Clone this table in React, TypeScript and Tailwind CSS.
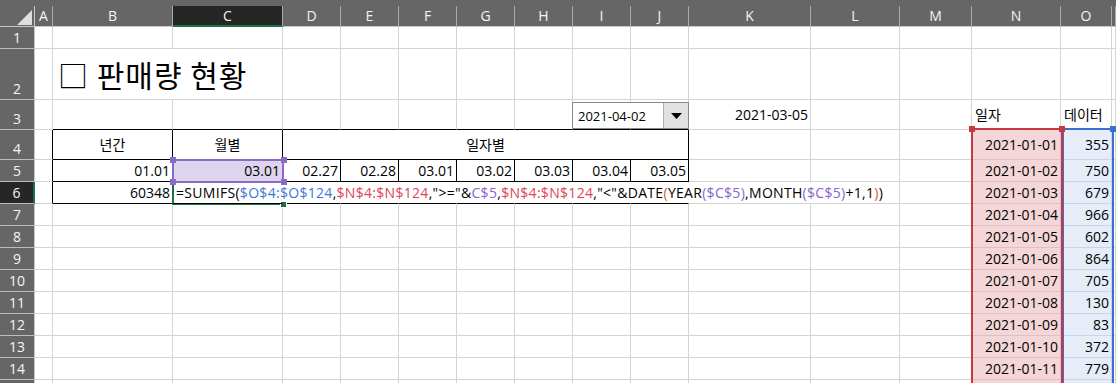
import React from 'react';

const COLS = ['A', 'B', 'C', 'D', 'E', 'F', 'G', 'H', 'I', 'J', 'K', 'L', 'M', 'N', 'O', 'P'];
const ROWS = [1, 2, 3, 4, 5, 6, 7, 8, 9, 10, 11, 12, 13, 14, 15];

const RC: Record<string, string> = {
  g: 'border-r-[#d4d4d4]',
  k: 'border-r-black',
  n: 'border-r-transparent',
  p: 'border-r-[#dcc0c2]',
  b: 'border-r-[#cbd4e2]',
};
const BC: Record<string, string> = {
  g: 'border-b-[#d4d4d4]',
  k: 'border-b-black',
  n: 'border-b-transparent',
  p: 'border-b-[#dcc0c2]',
  b: 'border-b-[#cbd4e2]',
};
const AL: Record<string, string> = {
  l: 'justify-start pl-[3px]',
  r: 'justify-end pr-[2px]',
  c: 'justify-center',
};

const dates = [
  '2021-01-01', '2021-01-02', '2021-01-03', '2021-01-04', '2021-01-05', '2021-01-06',
  '2021-01-07', '2021-01-08', '2021-01-09', '2021-01-10', '2021-01-11',
];
const vals = ['355', '750', '679', '966', '602', '864', '705', '130', '83', '372', '779'];
const row5 = ['02.27', '02.28', '03.01', '03.02', '03.03', '03.04', '03.05'];

function Formula() {
  const k = 'text-black';
  const bl = 'text-[#3f77d6]';
  const rd = 'text-[#e0435a]';
  const pu = 'text-[#8a65cc]';
  const or = 'text-[#e0582a]';
  return (
    <span className="whitespace-nowrap tracking-[0.3px]">
      <span className={k}>=SUMIFS(</span>
      <span className={bl}>$O$4:$O$124</span>
      <span className={k}>,</span>
      <span className={rd}>$N$4:$N$124</span>
      <span className={k}>,"&gt;="&amp;</span>
      <span className={pu}>C$5</span>
      <span className={k}>,</span>
      <span className={rd}>$N$4:$N$124</span>
      <span className={k}>,"&lt;"&amp;DATE</span>
      <span className={or}>(</span>
      <span className={k}>YEAR</span>
      <span className={pu}>($C$5)</span>
      <span className={k}>,MONTH</span>
      <span className={pu}>($C$5)</span>
      <span className={k}>+1,1</span>
      <span className={or}>)</span>
      <span className={k}>)</span>
    </span>
  );
}

function Cell({ c, r }: { c: string; r: number }) {
  let right = 'g';
  let bottom = 'g';
  let bg = '';
  let align = 'l';
  let content: React.ReactNode = null;
  let extra = '';
  const inTable = c >= 'B' && c <= 'J' && c.length === 1;

  if (r === 3 && inTable) bottom = 'k';
  if (c === 'A' && r >= 4 && r <= 6) right = 'k';

  if (r === 2 && c === 'B') {
    right = 'n';
    content = (
      <span className="whitespace-nowrap font-['Noto_Sans_CJK_KR',sans-serif] text-[30px] leading-[40px] tracking-[1px] text-black">
        □ 판매량 현황
      </span>
    );
    extra = 'relative z-10 pl-[5px]';
  }
  if (r === 3 && c === 'K') {
    content = '2021-03-05';
    align = 'r';
  }
  if (r === 3 && c === 'N') content = '일자';
  if (r === 3 && c === 'O') content = '데이터';

  if (r === 4) {
    if (c === 'B') { content = '년간'; align = 'c'; right = 'k'; bottom = 'k'; }
    if (c === 'C') { content = '월별'; align = 'c'; right = 'k'; bottom = 'k'; }
    if (c === 'D') { content = '일자별'; align = 'c'; right = 'k'; bottom = 'k'; extra = 'col-span-7'; }
  }
  if (r === 5 && inTable) {
    right = 'k';
    bottom = 'k';
    align = 'r';
    if (c === 'B') content = '01.01';
    if (c === 'C') { content = '03.01'; bg = 'bg-[#ddd4ee]'; }
    if (c >= 'D') content = row5[COLS.indexOf(c) - 3];
  }
  if (r === 6) {
    if (c === 'B') { content = '60348'; align = 'r'; right = 'k'; bottom = 'k'; }
    if (c >= 'C' && c <= 'J') { right = 'n'; bottom = 'k'; }
    if (c === 'K') right = 'n';
    if (c === 'C') {
      content = <Formula />;
      extra = 'relative z-10';
    }
  }
  if (c === 'N' && r >= 4) {
    bg = 'bg-[#f4d6d8]';
    right = 'p';
    bottom = 'p';
    align = 'r';
    content = dates[r - 4] ?? null;
  }
  if (c === 'O' && r >= 4) {
    bg = 'bg-[#e6edf9]';
    right = 'b';
    bottom = 'b';
    align = 'r';
    content = vals[r - 4] ?? null;
  }

  return (
    <div
      className={`flex min-w-0 items-center border-r border-b ${RC[right]} ${BC[bottom]} ${bg} ${AL[align]} ${extra} text-[14px] leading-[20px] text-black`}
    >
      {content}
    </div>
  );
}

function RowHeader({ r }: { r: number }) {
  const sel = r === 6;
  return (
    <div
      className={`flex items-end justify-center border-b border-b-[#bdbdbd] pb-[1px] text-[14px] leading-[18px] text-[#f5f5f5] ${
        sel ? 'bg-[#262626] border-r-2 border-r-[#1e7145]' : 'bg-[#666666] border-r border-r-[#c8c8c8]'
      }`}
    >
      {r < 15 ? r : ''}
    </div>
  );
}

function ColHeader({ c }: { c: string }) {
  const sel = c === 'C';
  return (
    <div
      className={`flex items-center justify-center border-r border-r-[#a9a9a9] text-[14px] leading-[18px] text-[#f5f5f5] ${
        sel ? 'bg-[#262626] border-b-2 border-b-[#1e7145]' : 'bg-[#666666] border-b border-b-[#c8c8c8]'
      }`}
    >
      {c === 'P' ? '' : c}
    </div>
  );
}

function Handle({ cls }: { cls: string }) {
  return <div className={`absolute h-[6px] w-[6px] ${cls}`} />;
}

export default function App() {
  return (
    <div className="relative h-[383px] w-[1116px] overflow-hidden bg-white font-['Open_Sans','Noto_Sans_CJK_KR',sans-serif]">
      <div className="h-[6px] bg-[#666666]" />
      <div className="grid grid-cols-[35px_18px_120px_110px_repeat(7,58px)_122px_89px_72px_89px_51px_1fr] grid-rows-[21px_22px_51px_30px_30px_repeat(11,22px)]">
        <div className="relative border-r border-b border-r-[#c8c8c8] border-b-[#c8c8c8] bg-[#666666]">
          <svg className="absolute left-[17px] top-[4px]" width="16" height="16" viewBox="0 0 16 16">
            <polygon points="15,0 15,15 0,15" fill="#dedede" />
          </svg>
        </div>
        {COLS.map((c) => (
          <ColHeader key={c} c={c} />
        ))}
        {ROWS.map((r) => (
          <React.Fragment key={r}>
            <RowHeader r={r} />
            {COLS.map((c) =>
              r === 4 && c >= 'E' && c <= 'J' ? null : <Cell key={c + r} c={c} r={r} />
            )}
          </React.Fragment>
        ))}
      </div>

      {/* date dropdown control */}
      <div className="absolute left-[572px] top-[102px] flex h-[27px] w-[117px] border border-[#8a8a8a] bg-white">
        <div className="flex flex-1 items-center pl-[5px] text-[13px] leading-[16px] text-black">2021-04-02</div>
        <div className="flex w-[25px] items-center justify-center border-l border-l-[#adadad] bg-[#e1e1e1]">
          <svg width="11" height="6" viewBox="0 0 11 6">
            <polygon points="0,0 11,0 5.5,6" fill="#000" />
          </svg>
        </div>
      </div>

      {/* C6 active cell */}
      <div className="absolute left-[172px] top-[182px] h-[23px] w-[2px] bg-[#1e7145]" />
      <div className="absolute left-[172px] top-[203px] h-[2px] w-[112px] bg-[#1e7145]" />
      <div className="absolute left-[280px] top-[201px] h-[7px] w-[7px] border border-white bg-[#1e7145]" />

      {/* C5 reference */}
      <div className="absolute left-[172px] top-[159px] h-[24px] w-[112px] border-2 border-[#8b6bc5]" />
      <Handle cls="left-[170px] top-[157px] bg-[#8b6bc5]" />
      <Handle cls="left-[281px] top-[157px] bg-[#8b6bc5]" />
      <Handle cls="left-[170px] top-[179px] bg-[#8b6bc5]" />
      <Handle cls="left-[281px] top-[179px] bg-[#8b6bc5]" />

      {/* O range */}
      <div className="absolute left-[1062px] top-[128px] h-[270px] w-[52px] border-2 border-[#3a6fcf]" />
      <Handle cls="left-[1110px] top-[126px] bg-[#3a6fcf]" />

      {/* N range */}
      <div className="absolute left-[971px] top-[128px] h-[270px] w-[92px] border-2 border-[#c6383f]" />
      <Handle cls="left-[969px] top-[126px] bg-[#c6383f]" />
      <Handle cls="left-[1059px] top-[126px] bg-[#c6383f]" />
    </div>
  );
}
